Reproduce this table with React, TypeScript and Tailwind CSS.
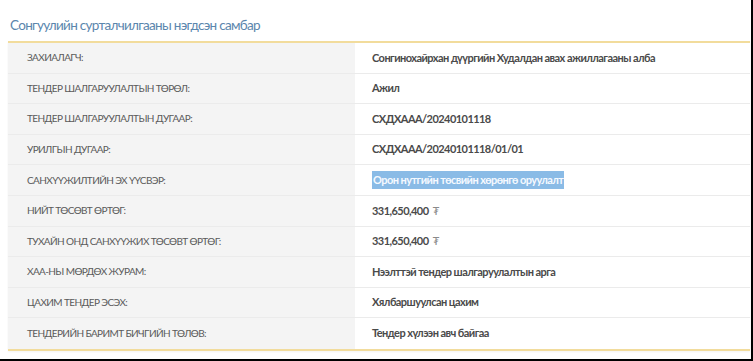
const rows: [string, string, boolean?][] = [
  ["ЗАХИАЛАГЧ:", "Сонгинохайрхан дүүргийн Худалдан авах ажиллагааны алба"],
  ["ТЕНДЕР ШАЛГАРУУЛАЛТЫН ТӨРӨЛ:", "Ажил"],
  ["ТЕНДЕР ШАЛГАРУУЛАЛТЫН ДУГААР:", "СХДХААА/20240101118"],
  ["УРИЛГЫН ДУГААР:", "СХДХААА/20240101118/01/01"],
  ["САНХҮҮЖИЛТИЙН ЭХ ҮҮСВЭР:", "Орон нутгийн төсвийн хөрөнгө оруулалт", true],
  ["НИЙТ ТӨСӨВТ ӨРТӨГ:", "331,650,400"],
  ["ТУХАЙН ОНД САНХҮҮЖИХ ТӨСӨВТ ӨРТӨГ:", "331,650,400"],
  ["ХАА-НЫ МӨРДӨХ ЖУРАМ:", "Нээлттэй тендер шалгаруулалтын арга"],
  ["ЦАХИМ ТЕНДЕР ЭСЭХ:", "Хялбаршуулсан цахим"],
  ["ТЕНДЕРИЙН БАРИМТ БИЧГИЙН ТӨЛӨВ:", "Тендер хүлээн авч байгаа"],
];

export default function App() {
  return (
    <div
      className="w-[753px] h-[361px] bg-white border-r-2 border-b-2 border-black overflow-hidden"
      style={{ fontFamily: 'Lato, "DejaVu Sans Condensed", sans-serif' }}
    >
      <h2 className="pt-[15px] pl-[10px] h-[41px] text-[13.5px] leading-[20px] tracking-[-0.7px] text-[#5b86ad]">
        Сонгуулийн сурталчилгааны нэгдсэн самбар
      </h2>
      <div className="ml-[8px] mr-[1px] border-t-2 border-b-2 border-[#f2dc9c] shadow-[0_1px_2px_rgba(0,0,0,0.05)]">
        {rows.map(([label, value, selected], i) => (
          <div
            key={i}
            className={`flex h-[30.6px] ${i < rows.length - 1 ? "border-b border-[#ebebeb]" : ""}`}
          >
            <div className="w-[347px] shrink-0 bg-[#f4f4f4] pl-[19px] flex items-center text-[10px] tracking-[-0.6px] text-[#5a5a5a]">
              {label}
            </div>
            <div className="flex-1 pl-[17px] flex items-center gap-[4px] text-[11px] tracking-[-0.55px] font-bold text-[#4a4a4a]">
              {selected ? (
                <span className="bg-[#8abbe6] text-[#f5f9ff] py-[1px] px-[1px]">{value}</span>
              ) : (
                <span>{value}</span>
              )}
              {value.startsWith("331") && (
                <span className="font-normal text-[#8a8a8a]">₮</span>
              )}
            </div>
          </div>
        ))}
      </div>
    </div>
  );
}
